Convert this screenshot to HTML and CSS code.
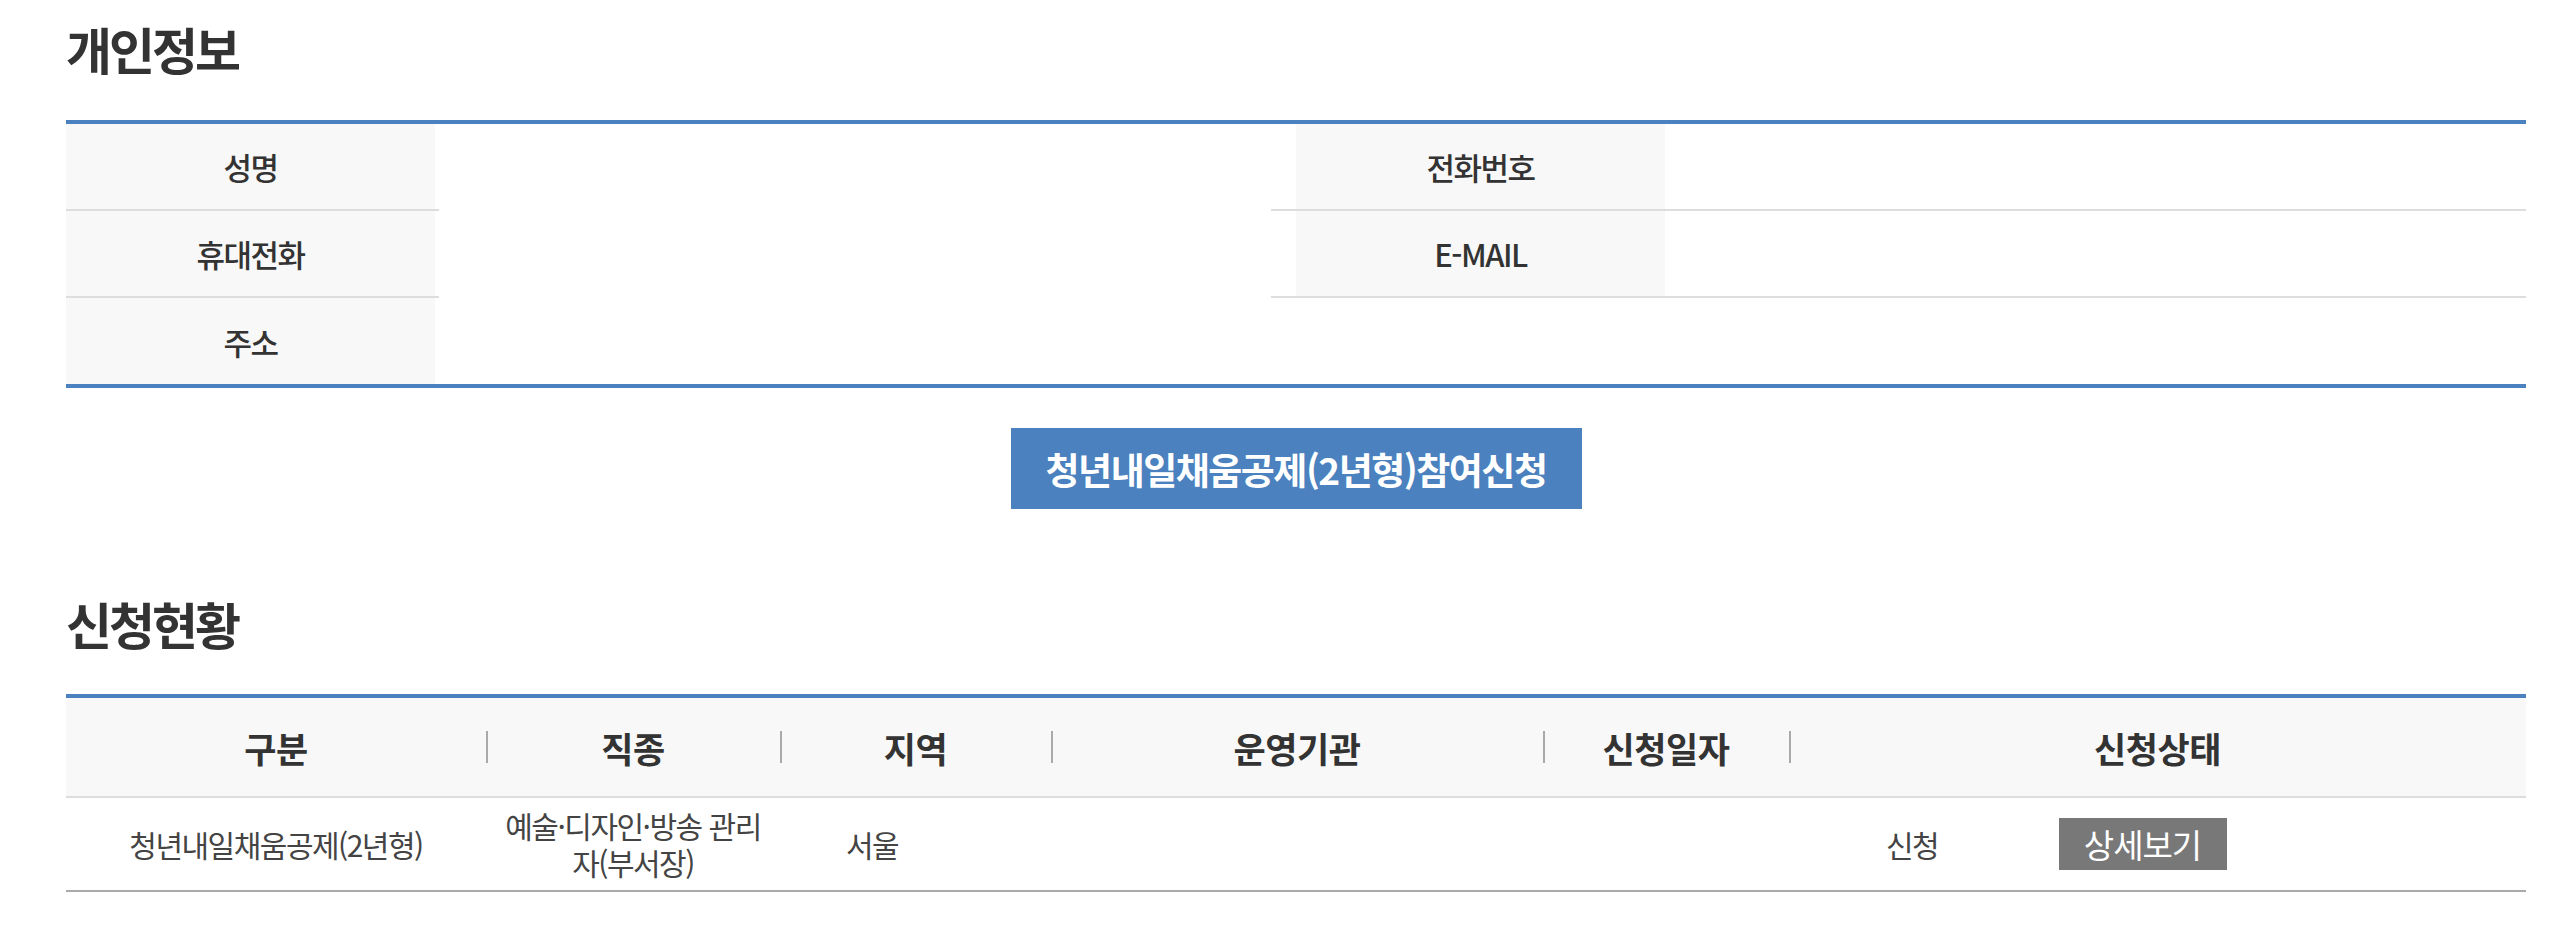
FILE: index.html
```html
<!DOCTYPE html>
<html lang="ko">
<head>
    <meta charset="UTF-8">
    <meta name="viewport" content="width=device-width, initial-scale=1.0">
    <title>개인정보 / 신청현황</title>
    <link rel="stylesheet" href="styles.css">
</head>
<body>
    <div class="wrap">
        <h2 class="tit">개인정보</h2>
        <div class="info">
            <div class="info-col info-left">
                <div class="info-row"><div class="label">성명</div><div class="value"></div></div>
                <div class="info-row"><div class="label">휴대전화</div><div class="value"></div></div>
                <div class="info-row"><div class="label">주소</div><div class="value"></div></div>
            </div>
            <div class="info-col info-right">
                <div class="info-row"><div class="label">전화번호</div><div class="value"></div></div>
                <div class="info-row"><div class="label">E-MAIL</div><div class="value"></div></div>
                <div class="info-row empty"></div>
            </div>
        </div>

        <div class="btn-area">
            <button class="btn-apply">청년내일채움공제(2년형)참여신청</button>
        </div>

        <h2 class="tit tit-list">신청현황</h2>
        <div class="list">
            <div class="list-head">
                <div class="th">구분</div>
                <div class="th">직종</div>
                <div class="th">지역</div>
                <div class="th">운영기관</div>
                <div class="th">신청일자</div>
                <div class="th">신청상태</div>
            </div>
            <div class="list-row">
                <div class="td">청년내일채움공제(2년형)</div>
                <div class="td td-job">예술·디자인·방송 관리자(부서장)</div>
                <div class="td">서울</div>
                <div class="td"></div>
                <div class="td">신청</div>
                <div class="td"><button class="btn-view">상세보기</button></div>
                <div class="td"></div>
            </div>
        </div>
    </div>
</body>
</html>
```

FILE: styles.css
```css
/* 기본 */
* {
    margin: 0;
    padding: 0;
    box-sizing: border-box;
}

body {
    background-color: #ffffff;
    color: #333333;
    font-family: "Noto Sans CJK KR", "Noto Sans", sans-serif;
}

.wrap {
    width: 2460px;
    margin-left: 66px;
}

.tit {
    padding-top: 23px;
    font-size: 50px;
    line-height: 50px;
    font-weight: 700;
    letter-spacing: -3px;
    color: #333333;
    margin-bottom: 47px;
}

.tit-list {
    padding-top: 0;
    margin-top: 89px;
    margin-bottom: 46px;
}

/* 개인정보 */
.info {
    display: grid;
    grid-template-columns: 1205px 1fr;
    border-top: 4px solid #4a81be;
    border-bottom: 4px solid #4a81be;
}

.info-row {
    display: flex;
    height: 87px;
}

.info-row:last-child {
    height: 86px;
}

.label {
    display: flex;
    align-items: center;
    justify-content: center;
    width: 369px;
    background-color: #f8f8f8;
    font-size: 31px;
    font-weight: 500;
    letter-spacing: -1.5px;
    color: #333333;
}

.value {
    flex: 1;
}

.info-left .label {
    width: 373px;
    padding-right: 4px;
    background-clip: content-box;
}

.info-left .info-row:not(:last-child) .label {
    border-bottom: 2px solid #dddddd;
}

.info-right .info-row {
    padding-left: 25px;
}

.info-right .info-row:not(.empty) {
    border-bottom: 2px solid #dddddd;
}

/* 신청 버튼 */
.btn-area {
    display: flex;
    justify-content: center;
    margin-top: 40px;
}

.btn-apply {
    width: 571px;
    height: 81px;
    border: none;
    background-color: #4a81be;
    color: #ffffff;
    font-family: inherit;
    font-size: 37px;
    font-weight: 700;
    letter-spacing: -1.5px;
    cursor: pointer;
}

/* 신청현황 */
.list {
    border-top: 4px solid #4a81be;
}

.list-head {
    display: grid;
    grid-template-columns: 420px 294px 271px 492px 246px 1fr;
    height: 100px;
    background-color: #f8f8f8;
    border-bottom: 2px solid #dddddd;
}

.th {
    position: relative;
    display: flex;
    align-items: center;
    justify-content: center;
    font-size: 35px;
    font-weight: 700;
    letter-spacing: -0.5px;
    color: #333333;
}

.th + .th::before {
    content: "";
    position: absolute;
    left: 0;
    top: 50%;
    width: 2px;
    height: 32px;
    margin-top: -16px;
    background-color: #aaaaaa;
}

.list-row {
    display: grid;
    grid-template-columns: 420px 294px 184px 825px 246px 215px 1fr;
    height: 94px;
    border-bottom: 2px solid #aaaaaa;
}

.td {
    display: flex;
    align-items: center;
    justify-content: center;
    text-align: center;
    font-size: 30px;
    line-height: 37px;
    letter-spacing: -1.5px;
    color: #444444;
}

.td-job {
    padding: 0 10px;
}

.btn-view {
    width: 168px;
    height: 52px;
    border: none;
    background-color: #787878;
    color: #ffffff;
    font-family: inherit;
    font-size: 33px;
    letter-spacing: -1px;
    cursor: pointer;
}
```
